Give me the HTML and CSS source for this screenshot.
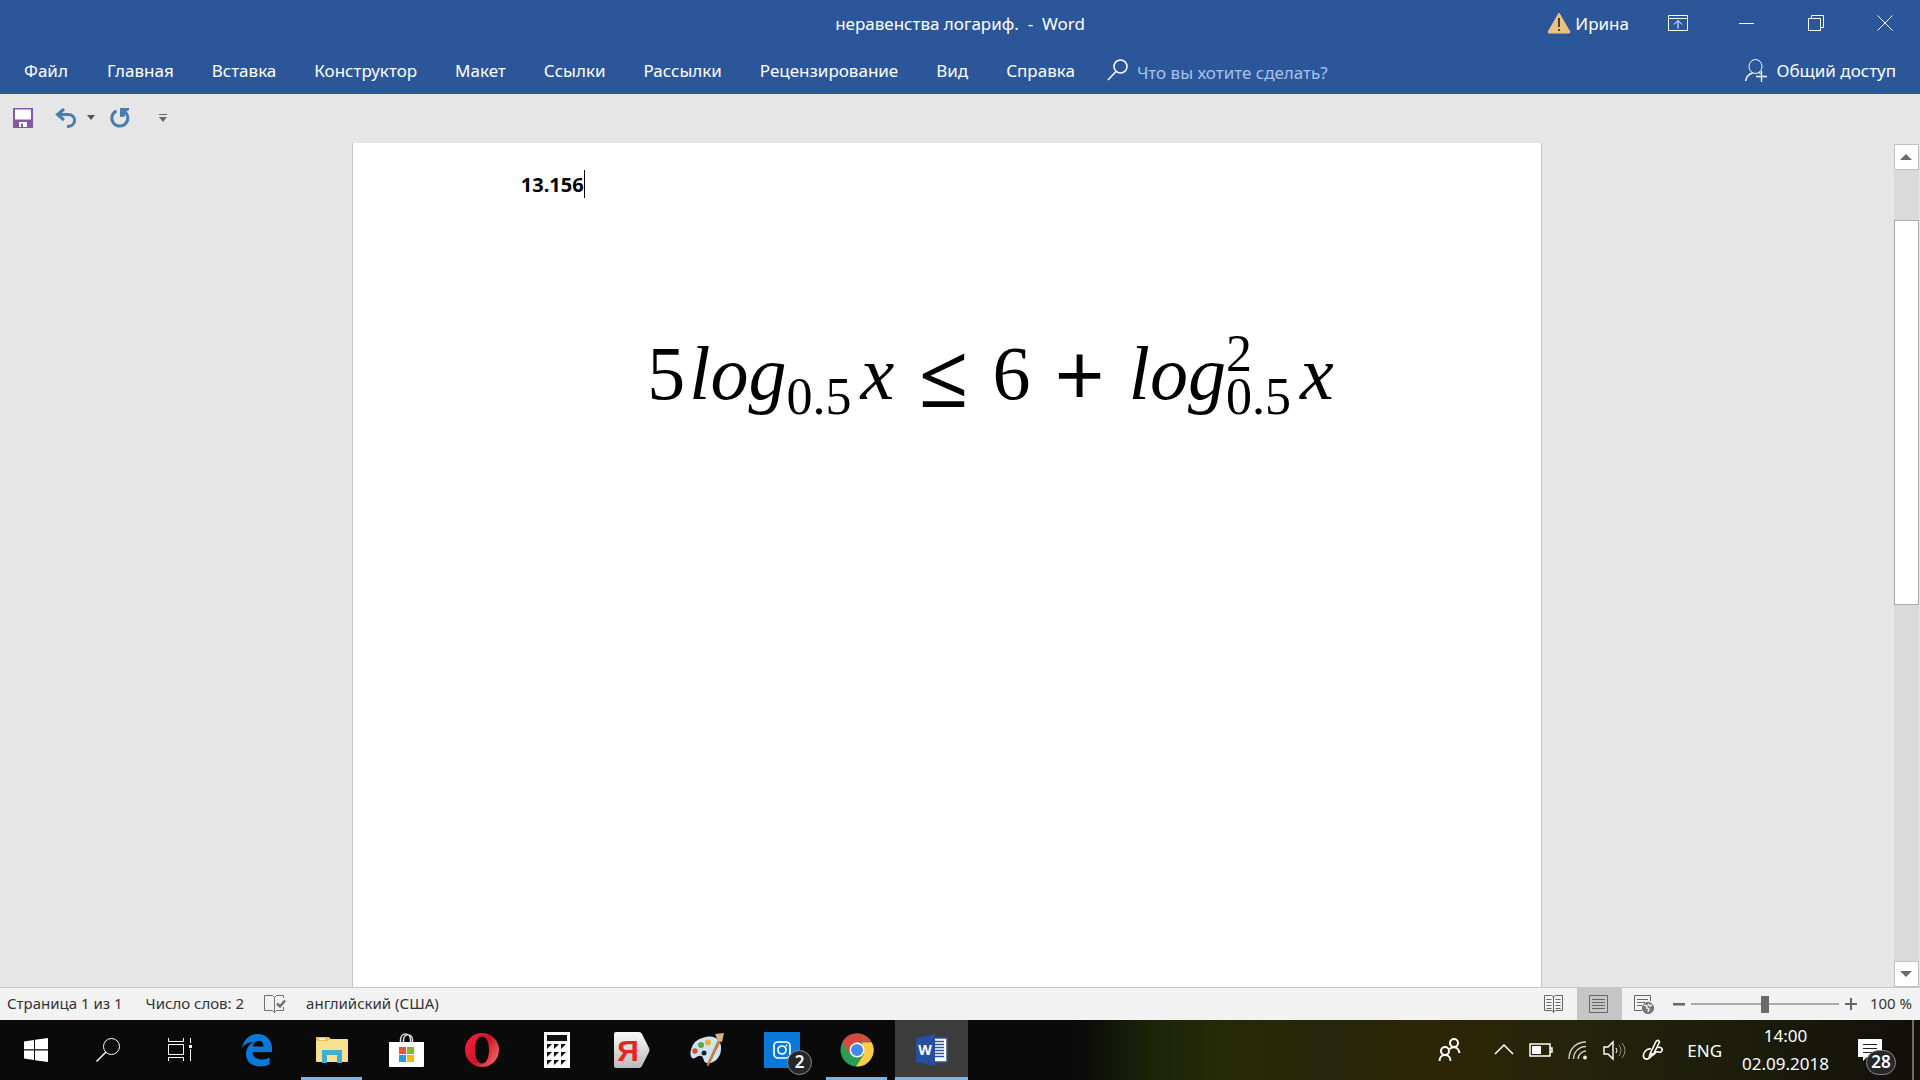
FILE: index.html
```html
<!DOCTYPE html>
<html lang="ru">
<head>
  <meta charset="UTF-8" />
  <meta name="viewport" content="width=device-width, initial-scale=1.0"/>
  <title>неравенства логариф. - Word</title>
  <link rel="stylesheet" href="styles.css">
</head>
<body>
  <header class="ribbon">
    <div class="titlebar">
      <h1 class="title">неравенства логариф.&nbsp; -&nbsp; Word</h1>
      <div class="window-tools">
        <button class="user">
          <svg width="24" height="22" viewBox="0 0 24 22"><path d="M12 1 L23 20 Q23 21 22 21 H2 Q1 21 1 20 Z" fill="#eac282" stroke="#eac282" stroke-linejoin="round"/><path d="M12 6v9M12 17v2" stroke="#4a4030" stroke-width="2"/></svg>
          Ирина
        </button>
        <button class="win" aria-label="Параметры отображения ленты">
          <svg width="20" height="16" viewBox="0 0 20 16" class="line"><path d="M.5 .5h19v15H.5zM.5 3.500h19M10 13.500V6M6 9.500l4-4 4 4"/></svg>
        </button>
        <button class="win" aria-label="Свернуть">
          <svg width="16" height="16" viewBox="0 0 16 16" class="line"><path d="M0 8.500h15"/></svg>
        </button>
        <button class="win" aria-label="Свернуть в окно">
          <svg width="16" height="16" viewBox="0 0 16 16" class="line"><path d="M.5 3.500h12v12H.5zM3.500 3.500v-3h12v12h-3"/></svg>
        </button>
        <button class="win" aria-label="Закрыть">
          <svg width="16" height="16" viewBox="0 0 16 16" class="line"><path d="M.5 .5l15 15M15.500 .5l-15 15"/></svg>
        </button>
      </div>
    </div>
    <nav class="tabs">
      <button class="tab file">Файл</button>
      <button class="tab">Главная</button>
      <button class="tab">Вставка</button>
      <button class="tab">Конструктор</button>
      <button class="tab">Макет</button>
      <button class="tab">Ссылки</button>
      <button class="tab">Рассылки</button>
      <button class="tab">Рецензирование</button>
      <button class="tab">Вид</button>
      <button class="tab">Справка</button>
      <label class="tell-me">
        <svg width="22" height="22" viewBox="0 0 22 22" class="line"><circle cx="13.500" cy="7.500" r="6.500" stroke-width="1.500"/><path d="M9 12.500L1 21" stroke-width="1.500"/></svg>
        <input type="text" placeholder="Что вы хотите сделать?" aria-label="Что вы хотите сделать?">
      </label>
      <button class="share">
        <svg width="23" height="23" viewBox="0 0 23 23" class="line"><ellipse cx="10.500" cy="7.500" rx="6.500" ry="7"/><path d="M.5 22c1-5 3-7 7-8M14 13.500l1.500 1M11 17.500h11M16.500 12v11" stroke-width="1.300"/></svg>
        Общий доступ
      </button>
    </nav>
  </header>

  <div class="quick-access">
    <button aria-label="Сохранить">
      <svg width="20" height="20" viewBox="0 0 20 20"><path d="M0 0h20v20H0z" fill="#8458a8"/><path d="M2 1.500h16v10H2zM6 14h8v5H6z" fill="#fff"/><path d="M8 15.500h2V19H8z" fill="#8458a8"/></svg>
    </button>
    <button class="undo" aria-label="Отменить">
      <svg width="22" height="20" viewBox="0 0 22 20" fill="none" stroke="#4a7cae" stroke-width="3"><path d="M9 1L2.500 6.500 9 12M3 6.500h10c9 0 9 12-1 12"/></svg>
    </button>
    <button class="undo-list" aria-label="Список отмены">
      <svg width="8" height="5" viewBox="0 0 8 5"><path d="M0 0h8L4 5z" fill="#555"/></svg>
    </button>
    <button class="redo" aria-label="Повторить">
      <svg width="22" height="20" viewBox="0 0 22 20"><path d="M7.500 2.800a8 8 0 1 0 8 .8" fill="none" stroke="#4a7cae" stroke-width="3"/><path d="M11 0h9v2l-4 2.500v4L11 9z" fill="#4a7cae"/></svg>
    </button>
    <button class="customize" aria-label="Настройка панели быстрого доступа">
      <svg width="8" height="8" viewBox="0 0 8 8"><path d="M0 0h8v1H0zM0 3h8L4 8z" fill="#666"/></svg>
    </button>
  </div>

  <main class="workspace">
    <article class="sheet">
      <p class="number">13.156<span class="caret"></span></p>
      <p class="formula">
        <span>5</span>
        <i>log</i>
        <span class="scripts"><span>0.5</span></span>
        <i>x</i>
        <span class="operator">≤</span>
        <span>6</span>
        <span class="operator">+</span>
        <i>log</i>
        <span class="scripts"><span>2</span><span>0.5</span></span>
        <i>x</i>
      </p>
    </article>
    <div class="scrollbar">
      <button class="arrow" aria-label="Вверх"><svg width="12" height="6" viewBox="0 0 12 6"><path d="M0 6h12L6 0z" fill="#6a6a6a"/></svg></button>
      <div class="track"><div class="thumb"></div></div>
      <button class="arrow" aria-label="Вниз"><svg width="12" height="6" viewBox="0 0 12 6"><path d="M0 0h12L6 6z" fill="#6a6a6a"/></svg></button>
    </div>
  </main>

  <footer class="status">
    <span class="pages">Страница 1 из 1</span>
    <span>Число слов: 2</span>
    <button class="proof" aria-label="Правописание">
      <svg width="22" height="18" viewBox="0 0 22 18" fill="none" stroke="#707070"><path d="M10.500 2.500L8.500.5h-8v15h8l2 2 2-2h7V12M10.500 2.500v15M10.500 2.500l2-2h7V3"/><path d="M13 8.500l3 3 5-6" stroke-width="2.500"/></svg>
    </button>
    <span>английский (США)</span>
    <div class="views">
      <button class="view" aria-label="Режим чтения">
        <svg width="20" height="18" viewBox="0 0 20 18" fill="none" stroke="#666"><path d="M.5.5h7l2 1 2-1h7v15h-7l-2 1-2-1h-7zM9.500 1v17M2.500 4.500h5M2.500 7.500h5M2.500 10.500h5M2.500 13.500h5M11.500 4.500h5M11.500 7.500h5M11.500 10.500h5M11.500 13.500h5"/></svg>
      </button>
      <button class="view active" aria-label="Разметка страницы">
        <svg width="20" height="18" viewBox="0 0 20 18" fill="none" stroke="#666"><path d="M.5.5h18v17H.5zM3 4.500h13M3 7.500h13M3 10.500h13M3 13.500h13"/></svg>
      </button>
      <button class="view" aria-label="Веб-документ">
        <svg width="20" height="19" viewBox="0 0 20 19" fill="none" stroke="#666"><path d="M8 15.500H.5V.5h16V6M3 4.500h11M3 7.500h8M3 10.500h5"/><circle cx="14" cy="13" r="5.500" fill="#777"/><path d="M10 10l3 1v2l2 1-1 3M14 9l2 2 2-1" stroke="#eee" stroke-width="1.500"/></svg>
      </button>
      <button class="zoom-step" aria-label="Уменьшить"><svg width="12" height="12" viewBox="0 0 12 12"><path d="M0 5h12v2.500H0z" fill="#666"/></svg></button>
      <input class="zoom" type="range" min="10" max="190" value="100" aria-label="Масштаб">
      <button class="zoom-step" aria-label="Увеличить"><svg width="12" height="12" viewBox="0 0 12 12"><path d="M0 5h12v2H0zM5 0h2v12H5z" fill="#666"/></svg></button>
      <span class="percent">100 %</span>
    </div>
  </footer>

  <div class="taskbar">
    <div class="system">
      <button aria-label="Пуск">
        <svg width="24" height="24" viewBox="0 0 24 24" fill="#fff"><path d="M0 3.400L10 2v9.300H0zM11 1.800L24 0v11.300H11zM0 12.500h10V22L0 20.600zM11 12.500h13V24l-13-1.800z"/></svg>
      </button>
      <button aria-label="Поиск">
        <svg width="24" height="24" viewBox="0 0 24 24" class="line"><circle cx="15.500" cy="8.500" r="8"/><path d="M10 14L.5 23.500" stroke-width="1.400"/></svg>
      </button>
      <button aria-label="Представление задач">
        <svg width="24" height="24" viewBox="0 0 24 24" class="line"><path d="M.5 0v3.500h15V0M.5 6.500h15v10H.5zM.5 23v-3.500h15V23M22.500 0v5M22.500 11v12"/><path d="M21 7h3v3h-3z" fill="#fff" stroke="none"/></svg>
      </button>
    </div>
    <div class="apps">
      <button class="app" aria-label="Edge">
        <svg width="32" height="34" viewBox="0 0 32 34"><path d="M1 15C3 6 9 1 16.500 1 26 1 31 8 31 15v4H11.500c.3 5 4 7.500 9 7.500 3.500 0 6-.8 8-2v7c-2.500 1.300-5.500 2-9 2C10.500 33.500 5 28.500 5 21c0-5.500 3-9.500 7.500-12C7.500 9 3.500 11 1 15zm11-1.500h10.500c0-3.500-1.500-5.500-5-5.500-3 0-5 2-5.500 5.500z" fill="#0a78d6"/></svg>
      </button>
      <button class="app open" aria-label="Проводник">
        <svg width="32" height="28" viewBox="0 0 32 28"><path d="M0 2Q0 1 1 1h11l3 2h16q1 0 1 1v21q0 1-1 1H1q-1 0-1-1z" fill="#f9e08e"/><path d="M0 2Q0 1 1 1h12l1 3-3 1H0z" fill="#ebc34a"/><path d="M3 2h6v2H3z" fill="#fff3bd"/><path d="M6 14h20v13h-5v-8H11v8H6z" fill="#41aed3"/></svg>
      </button>
      <button class="app" aria-label="Магазин">
        <svg width="35" height="34" viewBox="0 0 35 34"><path d="M11.500 10V7c0-8 10-8 10 0v3M14.500 10V7c0-7 9-7 9 0v3" fill="none" stroke="#ddd" stroke-width="1.500"/><path d="M0 9h35v24q0 1-1 1H1q-1 0-1-1z" fill="#fff"/><path d="M10 14h7v7h-7z" fill="#e8532a"/><path d="M18 14h7v7h-7z" fill="#7fb91c"/><path d="M10 22h7v7h-7z" fill="#1a9fe0"/><path d="M18 22h7v7h-7z" fill="#fab908"/></svg>
      </button>
      <button class="app" aria-label="Opera">
        <svg width="36" height="36" viewBox="0 0 36 36"><defs><linearGradient id="opera" x2="1" y2=".6"><stop offset="0" stop-color="#ff2438"/><stop offset=".6" stop-color="#c9152b"/><stop offset="1" stop-color="#f25a5f"/></linearGradient></defs><path fill-rule="evenodd" d="M18 1a17 17 0 1 0 0 34 17 17 0 1 0 0-34zm0 3.500c4.500 0 7 6 7 13.500s-2.500 13.500-7 13.500S11 25.500 11 18s2.500-13.500 7-13.500z" fill="url(#opera)"/></svg>
      </button>
      <button class="app" aria-label="Калькулятор">
        <svg width="26" height="36" viewBox="0 0 26 36"><path d="M0 0h26v36H0z" fill="#fff"/><path d="M3 3h20v6H3zM3 12h5L3 17zM10 12h5l-5 5zM17 12h5l-5 5zM3 20h5l-5 5zM10 20h5l-5 5zM17 20h5l-5 5zM3 28h5l-5 5zM10 28h5l-5 5zM17 28h5l-5 5z" fill="#111"/></svg>
      </button>
      <button class="app" aria-label="Яндекс">
        <svg width="36" height="36" viewBox="0 0 36 36"><defs><linearGradient id="tag" x2="0" y2="1"><stop offset="0" stop-color="#fafafa"/><stop offset="1" stop-color="#b9b9b9"/></linearGradient></defs><path d="M2 0h23q2 0 3 2l7 14q1 2 0 4l-7 14q-1 2-3 2H2q-2 0-2-2V2q0-2 2-2z" fill="url(#tag)"/><text x="14" y="29" class="ya">Я</text></svg>
      </button>
      <button class="app" aria-label="Paint">
        <svg width="36" height="36" viewBox="0 0 36 36"><path d="M17 5C27 3 33 9 32 18c-1 10-9 14-14 13-5-1-2-6-6-7-4-1-6 4-9 2-2-2-2-7 0-11C5 9 11 6 17 5z" fill="#cfe3f2"/><circle cx="15" cy="21" r="2.500" fill="#16202a"/><circle cx="6" cy="19" r="2.700" fill="#d2503c"/><circle cx="12" cy="13" r="3" fill="#5da548"/><circle cx="19" cy="10.500" r="3" fill="#efb02e"/><path d="M29 9l2 1-12 24-1-1z" fill="#d18a3c" stroke="#b8742c"/><path d="M26 2l9-1-2 9-4-1z" fill="#d9b380"/></svg>
      </button>
      <button class="app" aria-label="Instagram, 2 уведомления">
        <svg width="36" height="36" viewBox="0 0 36 36"><path d="M0 0h36v36H0z" fill="#0a78d6"/><g fill="none" stroke="#fff" stroke-width="1.700"><rect x="10" y="10" width="16" height="16" rx="4"/><circle cx="18" cy="18" r="4"/></g><circle cx="22.500" cy="13.500" r="1" fill="#fff"/></svg>
        <span class="badge">2</span>
      </button>
      <button class="app open" aria-label="Chrome">
        <svg width="34" height="34" viewBox="0 0 34 34"><circle cx="17" cy="17" r="16.500" fill="#2b9c54"/><path d="M2.500 9A16.500 16.500 0 0 1 31.500 9.500H17L9.500 21z" fill="#d64a3e"/><path d="M31.800 9.500A16.500 16.500 0 0 1 16 33.500l8-12.500-2-11.500z" fill="#fcce43"/><circle cx="17" cy="17" r="7.500" fill="#fff"/><circle cx="17" cy="17" r="6" fill="#4585ee"/></svg>
      </button>
      <button class="app open active" aria-label="Word">
        <svg width="32" height="32" viewBox="0 0 32 32"><path d="M17 4h14v24H17z" fill="#fff" stroke="#2b5797" stroke-width="1.500"/><path d="M18 7.500h10M18 10.500h10M18 13.500h10M18 16.500h10M18 19.500h10M18 22.500h10" stroke="#2b5797" stroke-width="1.500"/><path d="M0 4l19-4v32L0 28z" fill="#2550a0"/><text x="9" y="21" class="word">W</text></svg>
      </button>
    </div>
    <div class="tray">
      <button class="people" aria-label="Люди">
        <svg width="24" height="24" viewBox="0 0 24 24" class="line bold"><circle cx="16" cy="5" r="4"/><circle cx="7" cy="13" r="4"/><path d="M1.500 23c0-8 11-8 11 0M11.500 11c4-3 9-2 10 4"/></svg>
      </button>
      <button aria-label="Скрытые значки"><svg width="20" height="24" viewBox="0 0 20 24" class="line"><path d="M1 16l9-9 9 9" stroke-width="1.500"/></svg></button>
      <button aria-label="Батарея"><svg width="24" height="24" viewBox="0 0 24 24" class="line"><path d="M1 6h20v12H1zM21 10h2v4h-2" stroke-width="1.500"/><path d="M3 8h9v8H3z" fill="#fff" stroke="none"/></svg></button>
      <button aria-label="Сеть"><svg width="20" height="24" viewBox="0 0 20 24" class="line"><path d="M1 21C1 11 8 4 18 4M5.500 21C5.500 14 11 8.500 18 8.500M10 21c0-4 4-8 8-8" opacity=".8" stroke-width="1.400"/><circle cx="17" cy="19.500" r="1.500" fill="#fff"/></svg></button>
      <button aria-label="Громкость"><svg width="24" height="24" viewBox="0 0 24 24" class="line"><path d="M1 9h4l5-5v17l-5-5H1z" stroke-width="1.400"/><path d="M13 10q2 2.500 0 5"/><path d="M16 7q4 5.500 0 11M19 5q6 7.500 0 15" opacity=".5"/></svg></button>
      <button aria-label="Windows Ink"><svg width="22" height="24" viewBox="0 0 22 24" class="line"><path d="M8 16L14 3.500q2.500-2.500 3.500.5L11 17l-4 3zM9 11c-5-1-9 5-7 9 4 3 8-1 8-5M14 10c5-2 8 1 5 4-2 1-3-1-5 0-1 1-2 3-3 3" stroke-width="1.600"/></svg></button>
      <button class="lang">ENG</button>
      <button class="clock"><time>14:00</time><time>02.09.2018</time></button>
      <button class="notify" aria-label="Уведомления">
        <svg width="24" height="24" viewBox="0 0 24 24"><path d="M0 1h24v18H9l-4 4v-4H0z" fill="#fff"/><path d="M5 6.500h14M5 10.500h14M5 14.500h9" stroke="#222"/></svg>
        <span class="badge">28</span>
      </button>
      <button class="show-desktop" aria-label="Показать рабочий стол"></button>
    </div>
  </div>
</body>
</html>
```
FILE: styles.css
```css
* {
  box-sizing: border-box;
}
body {
  margin: 0;
  height: 100vh;
  display: flex;
  flex-direction: column;
  background: #e6e6e6;
  font-family: "Noto Sans", "Open Sans", sans-serif;
  font-size: 17px;
  overflow: hidden;
}
button {
  position: relative;
  display: flex;
  align-items: center;
  justify-content: center;
  padding: 0;
  border: none;
  background: none;
  color: inherit;
  font: inherit;
  white-space: nowrap;
}
svg {
  display: block;
  flex: none;
}
.line {
  fill: none;
  stroke: #fff;
}
.bold {
  stroke-width: 2;
}

/* Title bar and tabs */
.ribbon {
  background: #2b579a;
  color: #fff;
}
.titlebar {
  display: grid;
  grid-template-columns: 1fr auto 1fr;
  align-items: center;
  height: 46px;
}
.title {
  grid-column: 2;
  margin: 0;
  font-size: 17px;
  font-weight: normal;
}
.window-tools {
  display: flex;
  justify-content: flex-end;
  height: 46px;
  padding-right: 1px;
}
.user {
  gap: 4px;
  margin-right: 14px;
}
.win {
  width: 69px;
}
.tabs {
  display: flex;
  height: 48px;
}
.tab {
  padding: 0 19px;
}
.file {
  padding: 0 20px 0 24px;
}
.tell-me {
  display: flex;
  align-items: center;
  gap: 8px;
  margin-left: 13px;
}
.tell-me input {
  width: 240px;
  padding: 4px 0 0;
  border: none;
  background: none;
  color: #fff;
  font: inherit;
}
.tell-me input::placeholder {
  color: #a9c1e8;
}
.share {
  gap: 8px;
  margin-left: auto;
  padding-right: 24px;
}

/* Quick access toolbar */
.quick-access {
  display: flex;
  align-items: center;
  height: 49px;
  padding: 0 13px 2px;
}
.undo {
  margin-left: 22px;
}
.undo-list {
  margin-left: 10px;
}
.redo {
  margin-left: 14px;
}
.customize {
  margin-left: 28px;
}

/* Document */
.workspace {
  flex: 1;
  min-height: 0;
  display: flex;
}
.sheet {
  width: 62vw;
  margin: 0 auto;
  padding: 27px 168px 0;
  background: #fff;
  border: solid #c6c6c6;
  border-width: 0 1px;
}
.number {
  display: flex;
  align-items: center;
  margin: 0;
  height: 28px;
  font-size: 20px;
  font-weight: bold;
}
.caret {
  width: 1px;
  height: 28px;
  background: #000;
}
.formula {
  display: flex;
  align-items: center;
  justify-content: center;
  gap: 4px;
  margin: 130px 0 0 87px;
  font-family: "Liberation Serif", serif;
  font-size: 76px;
  line-height: 88px;
}
.operator {
  padding: 0 20px;
  font-family: "Open Sans", sans-serif;
  font-size: 88px;
}
.scripts {
  display: grid;
  align-content: end;
  height: 90px;
  margin: 0 5px 0 -4px;
  font-size: 52px;
  line-height: 43px;
}

.scrollbar {
  display: flex;
  flex-direction: column;
  width: 26px;
  padding: 1px 1px 0 0;
}
.arrow {
  height: 26px;
  background: #fff;
  border: 1px solid #c0c0c0;
}
.track {
  flex: 1;
  padding-top: 50px;
  background: #dadada;
}
.thumb {
  height: 52%;
  background: #fff;
  border: 1px solid #ababab;
}

/* Status bar */
.status {
  display: flex;
  align-items: center;
  gap: 20px;
  height: 33px;
  padding-left: 7px;
  background: #f2f2f2;
  border-top: 1px solid #c6c6c6;
  color: #333;
  font-size: 15px;
}
.status span {
  padding-bottom: 2px;
}
.pages {
  margin-right: 3px;
}
.views {
  display: flex;
  align-items: center;
  align-self: stretch;
  margin-left: auto;
  padding-right: 8px;
}
.view {
  align-self: stretch;
  width: 45px;
}
.view.active {
  background: #c6c6c6;
}
.zoom-step {
  width: 24px;
}
.zoom {
  appearance: none;
  width: 148px;
  height: 18px;
  margin: 0;
  background: linear-gradient(#ababab, #ababab) center / 100% 2px no-repeat;
}
.zoom::-webkit-slider-thumb {
  appearance: none;
  width: 8px;
  height: 17px;
  background: #6a6a6a;
}
.percent {
  margin-left: 7px;
}

/* Taskbar */
.taskbar {
  display: flex;
  height: 60px;
  background: linear-gradient(90deg, #0a0a0a 56%, #1c2308 60%, #262b06 64%, #26260a 69%, #2c2606 75%, #24240a 82%, #1a1c0a 92%, #120f0c);
  color: #fff;
}
.system {
  display: flex;
}
.system button {
  width: 72px;
}
.apps {
  display: flex;
  gap: 2px;
  margin-left: 4px;
}
.app {
  width: 73px;
}
.app.open::after {
  content: "";
  position: absolute;
  bottom: 0;
  left: 6px;
  right: 6px;
  height: 3px;
  background: #7fb2e5;
}
.app.active {
  background: #3c3c3c;
}
.app.active::after {
  left: 0;
  right: 0;
}
.badge {
  position: absolute;
  left: 42px;
  top: 30px;
  min-width: 25px;
  height: 25px;
  border: 1px solid #8a8a8a;
  border-radius: 13px;
  background: #26282a;
  font-size: 17px;
  font-weight: 600;
  line-height: 22px;
  text-align: center;
}
.ya {
  fill: #e52620;
  font: bold 30px "Liberation Sans Narrow", "Liberation Sans", sans-serif;
  text-anchor: middle;
}
.word {
  fill: #fff;
  font: bold 14px "Open Sans", sans-serif;
  text-anchor: middle;
}
.tray {
  display: flex;
  align-items: stretch;
  gap: 15px;
  margin-left: auto;
}
.people {
  margin-right: 17px;
}
.lang {
  margin-left: 8px;
}
.clock {
  flex-direction: column;
  line-height: 28px;
  margin-left: 5px;
}
.notify {
  margin-left: 14px;
}
.notify .badge {
  left: 8px;
  min-width: 30px;
}
.show-desktop {
  width: 8px;
  margin-left: 15px;
  border-left: 2px solid #6b6b62;
}
```
